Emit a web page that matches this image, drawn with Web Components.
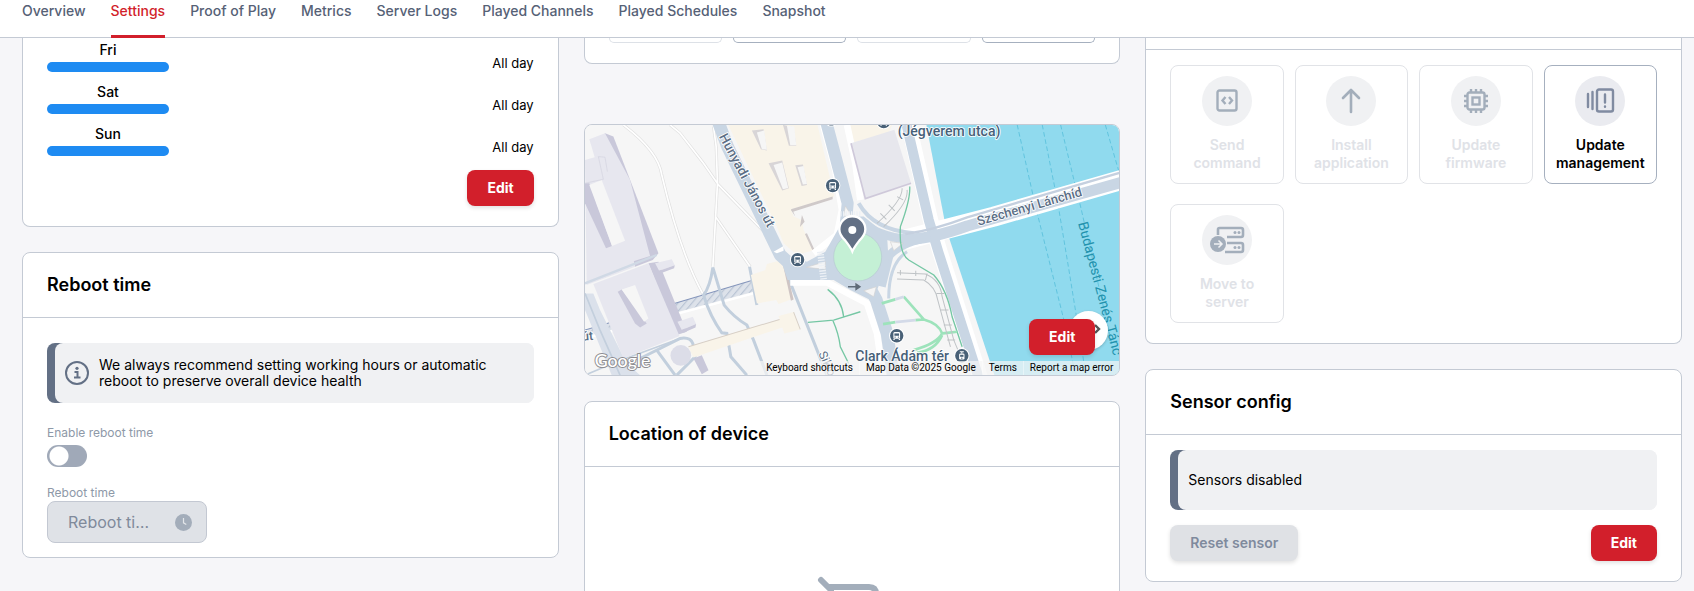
<!DOCTYPE html>
<html lang="en">
<head>
<meta charset="utf-8">
<title>Device settings</title>
<style>
  html { --line: #c4cad4; --red: #d21f2b; --slate: #637085; --muted: #a0a9b8; }
  body { margin: 0; background: #f6f6f9; color: #000; font: 14px/18px Inter, "Noto Sans", sans-serif; overflow: hidden; }
</style>
</head>
<body>
<settings-page></settings-page>
<script>
const define = (name, markup, setup) => {
  const t = document.createElement('template');
  t.innerHTML = '<style>*{box-sizing:border-box}:host([hidden]){display:none}</style>' + markup;
  customElements.define(name, class extends HTMLElement {
    constructor() {
      super();
      this.attachShadow({ mode: 'open' }).append(t.content.cloneNode(true));
    }
    connectedCallback() { if (setup) setup(this, this.shadowRoot); }
  });
};

define('tab-bar', `
<style>
  :host { display: block; background: #fff; box-shadow: inset 0 -1px var(--line); }
  nav { display: flex; gap: 25px; padding: 0 22px; }
  a { padding: 2px 0 15px; border-bottom: 3px solid transparent; color: #566176; font-weight: 500; text-decoration: none; white-space: nowrap; }
  a[aria-current] { color: var(--red); border-color: var(--red); }
</style>
<nav>
  <a href="#overview">Overview</a><a href="#settings" aria-current="page">Settings</a><a href="#proof">Proof of Play</a><a href="#metrics">Metrics</a><a href="#logs">Server Logs</a><a href="#channels">Played Channels</a><a href="#schedules">Played Schedules</a><a href="#snapshot">Snapshot</a>
</nav>`);

define('app-button', `
<style>
  :host { display: inline-block; }
  button { height: 36px; padding: 0 20px; border: 0; border-radius: 8px; background: var(--red); color: #fff; font: 700 14px/18px Inter, sans-serif; box-shadow: 0 2px 4px #0000001f; }
  button:disabled { background: #dfe1e5; color: #7f8a9d; font-weight: 600; }
</style>
<button type="button"><slot></slot></button>`,
(el, root) => { root.querySelector('button').disabled = el.hasAttribute('disabled'); });

/* `continued` marks a card whose beginning is scrolled under the tab bar */
define('app-card', `
<style>
  :host { display: block; background: #fff; border: 1px solid var(--line); border-radius: 8px; }
  :host([continued]) { border-top: 0; border-radius: 0 0 8px 8px; }
  header { padding: 20px 24px; border-bottom: 1px solid var(--line); }
  :host([continued]) header { padding: 0; height: 12px; }
  :host([headless]) header { display: none; }
  h2 { margin: 0; font: 600 18px/24px Inter, sans-serif; }
  .body { padding: 15px 24px 20px; }
  :host([continued][headless]) .body { padding-top: 0; }
</style>
<header><h2></h2></header><div class="body"><slot></slot></div>`,
(el, root) => { root.querySelector('h2').textContent = el.getAttribute('heading') || ''; });

define('day-row', `
<style>
  :host { display: flex; justify-content: space-between; height: 42px; }
  .day { width: 122px; text-align: center; font-weight: 500; }
  .bar { height: 10px; margin-top: 3px; border-radius: 5px; background: #1e8bf2; }
  .hours { margin-top: 13px; font-size: 13px; }
</style>
<div class="day"><slot></slot><div class="bar"></div></div><div class="hours">All day</div>`);

define('info-note', `
<style>
  :host { display: block; background: linear-gradient(90deg, var(--slate) 20px, #f0f1f3 20px); border-radius: 8px; padding-left: 8px; }
  div { display: flex; align-items: center; gap: 10px; min-height: 60px; padding: 0 16px 0 10px; border-radius: 8px; background: #f0f1f3; line-height: 16px; }
  ::slotted(svg) { flex: none; }
</style>
<div><slot name="icon"></slot><span><slot></slot></span></div>`);

define('action-tile', `
<style>
  :host { display: block; min-width: 0; }
  button { display: flex; flex-direction: column; align-items: center; gap: 10px; width: 100%; height: 119px; padding: 10px 0; background: #fff; border: 1px solid #a6b0bf; border-radius: 8px; color: #000; font: 600 14px/18px Inter, sans-serif; }
  .disc { display: grid; place-items: center; flex: none; width: 50px; height: 50px; border-radius: 50%; background: #eaebf0; color: #808ba1; }
  button:disabled { border-color: #e1e3e7; color: #e0e2e7; }
  button:disabled .disc { background: #f0f1f3; color: #a3aebb; }
  .label { width: 96px; }
</style>
<button type="button"><span class="disc"><slot name="icon"></slot></span><span class="label"><slot></slot></span></button>`,
(el, root) => { root.querySelector('button').disabled = el.hasAttribute('disabled'); });

define('toggle-field', `
<style>
  :host { display: flex; flex-direction: column; align-items: flex-start; gap: 4px; }
  label { color: #8e99a8; font-size: 12px; line-height: 16px; }
  input { appearance: none; margin: 0; width: 40px; height: 22px; border-radius: 11px; background: radial-gradient(circle at 12px 11px, #fff 9px, transparent 10px) #a0a9b8; }
</style>
<label for="t"><slot></slot></label><input id="t" type="checkbox" role="switch">`);

define('time-field', `
<style>
  :host { display: flex; flex-direction: column; align-items: flex-start; }
  label { color: #8e99a8; font-size: 12px; line-height: 16px; }
  .box { display: flex; align-items: center; gap: 24px; width: 160px; height: 42px; padding: 0 14px 0 20px; background: #dfe2e7; border: 1px solid #c3c8d2; border-radius: 8px; }
  input { flex: 1; min-width: 0; padding: 0; border: 0; background: none; font: 400 16px/20px Inter, sans-serif; text-overflow: ellipsis; }
  input::placeholder { color: #808a9b; opacity: 1; }
  svg { flex: none; }
</style>
<label for="v">Reboot time</label>
<div class="box"><input id="v" type="text" placeholder="Reboot time" disabled>
<svg width="17" height="17" viewBox="0 0 17 17"><circle cx="8.5" cy="8.5" r="8.5" fill="#a3adba"/><path d="M8.5 4v4.8l2.8 1.6" fill="none" stroke="#e3e6ea" stroke-width="1.2"/></svg></div>`);

define('device-map', `
<style>
  :host { display: block; position: relative; height: 252px; overflow: hidden; border: 1px solid var(--line); border-radius: 8px; background: #f6f6f6; font-family: Roboto, sans-serif; }
  .map { display: block; width: 100%; height: 100%; }
  .credits { position: absolute; right: 0; bottom: 0; display: flex; font-size: 10px; line-height: 14px; }
  .credits > * { padding: 0 6px; background: #f5f5f5b3; color: #000; text-decoration: none; border: 0; font: inherit; white-space: nowrap; }
  .credits > * + * { border-left: 1px solid #fff6; }
  .next { position: absolute; right: 11px; bottom: 25px; width: 39px; height: 39px; padding: 0 5px 0 0; border: 0; border-radius: 50%; background: #fff; box-shadow: 0 1px 3px #0003; text-align: right; }
  app-button { position: absolute; right: 24px; bottom: 20px; }
  .name { font-weight: 500; fill: #5b6e85; stroke: #fff; stroke-width: 5; paint-order: stroke; stroke-linejoin: round; }
  .place { fill: #466078; }
</style>
<svg class="map" viewBox="15 15 1602 750" preserveAspectRatio="xMidYMid slice" role="img" aria-label="Map">
  <defs>
    <pattern id="hatch" width="16" height="16" patternUnits="userSpaceOnUse" patternTransform="rotate(40)"><rect width="16" height="16" fill="#dde2ea"/><path d="M0 0v16" stroke="#b9c4d4" stroke-width="7"/></pattern>
    <g id="bus"><circle r="23" fill="#fff"/><circle r="20" fill="#496177"/><rect x="-10" y="-11" width="20" height="20" rx="4" fill="#fff"/><rect x="-7" y="-7" width="14" height="7" fill="#496177"/><circle cx="-5" cy="4" r="2" fill="#496177"/><circle cx="5" cy="4" r="2" fill="#496177"/><path d="M-8 9v4M8 9v4" stroke="#fff" stroke-width="4"/></g>
    <g id="tram"><circle r="23" fill="#fff"/><circle r="20" fill="#496177"/><rect x="-8" y="-7" width="16" height="18" rx="4" fill="#fff"/><path d="M-6 -12h12M0 -12v5" stroke="#fff" stroke-width="3"/><rect x="-5" y="-3" width="10" height="6" fill="#496177"/><circle cy="7" r="2" fill="#496177"/></g>
  </defs>
  <rect width="1640" height="790" fill="#f6f6f6"/>
  <path d="M1035 0 1092 300 1108 360 1250 790H1640V0z" fill="#90daee"/>
  <path d="M1310 15 1365 260 1450 600 1490 790M1385 15 1430 240 1465 450 1520 790M1440 15 1480 180 1500 260 1600 700M1574 15 1625 190" fill="none" stroke="#62c4de" stroke-width="3" stroke-dasharray="14 8"/>
  <!-- footpaths on the castle hill -->
  <g fill="none" stroke="#e0e0e0" stroke-width="9"><path d="M130 15Q235 95 245 165 300 400 370 525M270 15 300 40 370 130 415 195 600 385M400 20 408 80 412 190 398 440M406 290 510 440"/></g>
  <g fill="none" stroke="#fff" stroke-width="5"><path d="M130 15Q235 95 245 165 300 400 370 525M270 15 300 40 370 130 415 195 600 385M400 20 408 80 412 190 398 440M406 290 510 440"/></g>
  <!-- funicular -->
  <path d="M15 630 512 482 520 515 15 650z" fill="url(#hatch)"/><path d="M15 630 512 482" stroke="#8495bb" stroke-width="3"/><path d="M15 655 520 520" stroke="#fff" stroke-width="7"/>
  <g fill="none" stroke="#c2cfdd" stroke-width="9"><path d="M398 442Q390 500 370 525 390 590 425 638L440 640 452 710 500 765M398 442 432 555Q460 590 500 615L520 660 560 765M508 440 530 555M625 475 740 765"/><path d="M180 715 300 655Q330 650 338 670L345 710 290 765M230 690 285 765"/></g>
  <path d="M15 520 40 520 60 570 140 730 180 765H95L15 570z" fill="#dbe1eb"/><path d="M15 520 60 630 120 765M15 765 110 725 300 655" fill="none" stroke="#c3cfdd" stroke-width="5"/>
  <!-- castle buildings -->
  <path d="M75 40 100 50 235 400 218 420 165 440 60 60z" fill="#c9c8da"/>
  <path d="M28 58 75 40 150 180 210 408 160 424 165 440 20 495 15 120 44 112z" fill="#e7e7ef"/>
  <path d="M15 190 28 190 96 378 78 385 15 250z" fill="#c9c8da"/><path d="M28 195 65 180 135 362 96 378z" fill="#f6f6f6"/>
  <path d="M15 190 70 178 55 110 75 112 82 155" fill="none" stroke="#d3d3df" stroke-width="2"/>
  <path d="M235 425 320 635 290 645 205 430z" fill="#c9c8da"/>
  <path d="M40 492 205 430 298 648 130 715z" fill="#e7e7ef"/>
  <path d="M113 515 125 508 200 610 180 622 165 610z" fill="#c9c8da"/><path d="M125 508 165 495 205 595 192 605z" fill="#f6f6f6"/>
  <path d="M225 430 275 418 284 436 237 452zM292 605 338 590 348 612 305 630z" fill="#e7e7ef"/><path d="M237 452 284 436 282 445 242 460zM305 630 348 612 346 622 310 638z" fill="#c9c8da"/>
  <path d="M15 490 180 425 230 405" fill="none" stroke="#d0d9e5" stroke-width="7"/>
  <path d="M365 705 385 750 365 762 340 715z" fill="#c9c8da"/>
  <!-- beige city blocks -->
  <path d="M437 0H708L762 230 632 268 640 290 665 300 670 330 702 390 650 405 610 370 590 320z" fill="#f9f4e9"/>
  <path d="M632 268 757 230V238L636 276zM636 268 645 290 632 270M665 285l8 20-14 16M680 340l22 48-6 2-22-48" fill="#cfc9c9"/>
  <path d="M515 32 550 28 560 92 542 88zM608 15 640 22 648 78 626 78zM565 130 606 122 626 205 606 212zM645 136 668 134 680 195 664 198z" fill="#d8d5d7"/>
  <path d="M530 38 552 32 560 90 545 88zM620 18 642 20 648 76 630 76zM580 135 606 128 624 204 608 208zM652 142 670 138 680 192 668 194z" fill="#f6f6f6"/>
  <path d="M512 465 555 450 560 432 605 420 640 535 595 552 588 540 530 550z" fill="#f9f4e9"/><path d="M605 420 612 422 640 538 632 542z" fill="#cfc5c4"/>
  <path d="M325 680 598 598 595 588 640 576 660 628 612 640 606 622 340 712z" fill="#f9f4e9"/><path d="M325 680 598 598M640 576 660 628" stroke="#d7cfc6" stroke-width="3"/>
  <circle cx="302" cy="706" r="31" fill="#dcdde8"/>
  <path d="M795 15H935L925 38 812 70z" fill="#f9f4e9"/>
  <!-- white verges -->
  <g fill="none" stroke="#fff" stroke-linejoin="round"><path d="M728 15 765 150 785 270 770 345 700 400M630 487H740L860 550 890 640 910 780M800 15 825 130 840 240" stroke-width="20"/><path d="M970 360 1240 290 1640 175" stroke-width="60"/><path d="M985 15 1050 300 1080 400 1205 790" stroke-width="46"/></g>
  <path d="M812 70 942 30 992 190 855 236z" fill="#e7e7ed"/><path d="M812 70 855 236 992 190" fill="none" stroke="#cfc9da" stroke-width="5"/>
  <!-- roads -->
  <g fill="none" stroke="#c9d6e4" stroke-linejoin="round">
    <path d="M412 0 442 80 600 405 650 450" stroke-width="38"/>
    <path d="M736 0 768 120 802 250 795 330" stroke-width="36"/>
    <path d="M975 0 1045 300 1075 400 1200 790" stroke-width="30"/>
    <path d="M960 360Q1050 358 1160 318L1640 182" stroke-width="33"/>
    <path d="M910 430Q940 370 1050 350M850 310Q910 360 1020 358" stroke-width="26"/>
    <path d="M855 480 888 540 920 640 942 790" stroke-width="38"/>
    <path d="M930 400 905 500" stroke-width="22"/>
    <path d="M835 250Q880 330 1000 340" stroke-width="12"/>
    <path d="M980 395Q925 430 925 535" stroke-width="9"/>
  </g>
  <path d="M975 342Q1060 330 1160 292L1640 152" fill="none" stroke="#c5d0df" stroke-width="7"/>
  <path d="M595 400 625 410 680 425 735 395 775 325 790 290 850 290 920 345 925 430 885 520 870 540 810 510 760 480H622z" fill="#c9d6e4"/>
  <path d="M580 395 610 378V392L590 400z" fill="#fff"/>
  <path d="M678 442 735 425V448zM930 365 968 370 940 392zM850 512 888 500 880 530zM795 258 815 290 790 288z" fill="#f5f5f5" stroke="#d2d2d2" stroke-width="2"/>
  <path d="M720 395 730 478" stroke="#edf1f6" stroke-width="20" stroke-dasharray="4 4"/><path d="M780 282H840" stroke="#edf1f6" stroke-width="16" stroke-dasharray="4 4"/>
  <circle cx="832" cy="411" r="72" fill="#c4f0d5" stroke="#b7c9d2" stroke-width="2"/>
  <path d="M803 500h24v-8l12 8-12 8v-8" fill="#5f6b78" stroke="#5f6b78" stroke-width="4"/>
  <!-- park paths -->
  <g fill="none" stroke="#75c7a4" stroke-width="4"><path d="M742 508Q785 540 790 590M683 607 760 600 840 575M758 602Q775 640 780 680L805 730M988 200Q990 240 960 320 955 400 985 420L1060 465Q1100 510 1115 590L1145 680"/></g>
  <g fill="none" stroke="#9de3bb" stroke-width="8"><path d="M904 550 945 538M970 530 1030 598M908 612 945 606M1005 600 1030 598Q1075 610 1085 640L1130 635M1085 640Q1070 670 1000 690M1085 645Q1065 690 1010 698"/></g>
  <path d="M945 538 970 530M945 606 1005 600" stroke="#d3dae8" stroke-width="8"/>
  <g fill="none" stroke="#bfc3c6" stroke-width="3"><path d="M950 458 1035 462Q1080 480 1085 530L1120 660 1145 720M950 477 1030 480Q1065 500 1072 540L1110 680M965 205Q968 240 890 310M980 210Q985 250 910 320"/></g>
  <path d="M960 450v16M1006 452v16M1040 460l-5 20M1068 520h24M1080 570h24M1090 615h24M1100 660h24M900 280l18 18M925 255l18 18M950 230l18 10" stroke="#bfc3c6" stroke-width="3"/>
  <!-- labels -->
  <use href="#bus" x="757" y="197"/><use href="#bus" x="652" y="419"/><use href="#bus" x="949" y="647"/><use href="#tram" x="1144" y="707"/><use href="#bus" x="910" y="5"/><use href="#bus" x="753" y="-3"/>
  <text class="name" font-size="40" transform="translate(416 50) rotate(62)">Hunyadi János út</text>
  <text class="name" font-size="39" transform="translate(1194 317) rotate(-16)">Széchenyi Lánchíd</text>
  <text font-size="42" fill="#2292ad" transform="translate(1492 310) rotate(75)">Budapesti Zenés Tánc</text>
  <text class="name" font-size="36" transform="translate(714 700) rotate(66)" style="font-weight:400">Sikló</text>
  <text class="name" font-size="38" x="7" y="662" transform="rotate(-5 7 662)">út</text>
  <text class="name place" font-size="42" x="952" y="48">(Jégverem utca)</text>
  <text class="name place" font-size="42" x="825" y="722">Clark Ádám tér</text>
  <text font-size="53" x="44" y="740" font-family="Lato, sans-serif" font-weight="500" fill="#fff" stroke="#8e8e92" stroke-width="6" paint-order="stroke" stroke-linejoin="round">Google</text>
  <path d="M816 394Q812 384 795 362 777 345 777 328A39 39 0 0 1 855 328Q855 345 837 362 820 384 816 394z" fill="#637085" stroke="#fff" stroke-width="7"/><circle cx="816" cy="330" r="12" fill="#fff"/>
</svg>
<div class="credits"><span>Keyboard shortcuts</span><span>Map Data ©2025 Google</span><a href="#terms">Terms</a><a href="#report">Report a map error</a></div>
<button class="next" type="button" aria-label="Next"><svg width="10" height="12" viewBox="0 0 10 12"><path d="m2 2 4 4-4 4" fill="none" stroke="#555" stroke-width="2.4"/></svg></button>
<app-button>Edit</app-button>`);

define('settings-page', `
<style>
  :host { display: block; }
  main { display: grid; grid-template-columns: repeat(3, minmax(0, 1fr)); gap: 25px; align-items: start; padding: 0 12px 0 22px; }
  .column { display: flex; flex-direction: column; gap: 25px; min-width: 0; }
  .days { padding: 3px 0; }
  .end { display: flex; justify-content: flex-end; }
  .split { display: flex; justify-content: space-between; margin-top: 15px; }
  .reboot { display: flex; flex-direction: column; gap: 22px; padding-top: 10px; margin-bottom: -6px; }
  .reboot toggle-field { margin-bottom: -4px; }
  .tiles { display: grid; grid-template-columns: repeat(4, minmax(0, 1fr)); gap: 20px 11px; }
  .stubs { display: grid; grid-template-columns: repeat(4, minmax(0, 1fr)); gap: 11px; }
  .stubs i { height: 5px; border: 1px solid #dde1e7; border-top: 0; border-radius: 0 0 8px 8px; }
  .stubs i:nth-child(2n) { border-color: #a6b0bf; }
  device-map { margin-top: 35px; }
  .empty { display: flex; justify-content: center; padding: 94px 0 0; }
</style>
<tab-bar></tab-bar>
<main>
  <div class="column">
    <app-card continued headless>
      <div class="days"><day-row>Fri</day-row><day-row>Sat</day-row><day-row>Sun</day-row></div>
      <div class="end"><app-button>Edit</app-button></div>
    </app-card>
    <app-card heading="Reboot time">
      <div class="reboot">
        <info-note><svg slot="icon" width="24" height="24" viewBox="0 0 24 24" fill="none" stroke="#637085"><circle cx="12" cy="12" r="11" stroke-width="2"/><path d="M9.500 11H12.500V16M9 16.500H15.500" stroke-width="2"/><circle cx="12" cy="7.300" r="1.600" fill="#637085" stroke="none"/></svg>We always recommend setting working hours or automatic reboot to preserve overall device health</info-note>
        <toggle-field>Enable reboot time</toggle-field>
        <time-field></time-field>
      </div>
    </app-card>
  </div>
  <div class="column">
    <app-card continued headless><div class="stubs"><i></i><i></i><i></i><i></i></div></app-card>
    <device-map></device-map>
    <app-card heading="Location of device">
      <div class="empty"><svg width="70" height="60" viewBox="0 0 70 60" fill="none" stroke="#a3aebb" stroke-width="6" stroke-linecap="round" stroke-linejoin="round"><path d="M4 4 14 14V44Q14 50 20 50H52M12 11H52Q59 11 59 18V40"/></svg></div>
    </app-card>
  </div>
  <div class="column">
    <app-card continued>
      <div class="tiles">
        <action-tile disabled>Send command<svg slot="icon" width="24" height="24" viewBox="0 0 24 24" fill="none" stroke="currentColor" stroke-width="2.400"><rect x="2.500" y="1.500" width="19" height="20" rx="2"/><path d="m10.500 8-3 3.500 3 3.500M14 8l3 3.500-3 3.500"/></svg></action-tile>
        <action-tile disabled>Install application<svg slot="icon" width="24" height="26" viewBox="0 0 24 26" fill="none" stroke="currentColor" stroke-width="2.600" stroke-linecap="round" stroke-linejoin="round"><path d="M12 24V2M4 10l8-8 8 8"/></svg></action-tile>
        <action-tile disabled>Update firmware<svg slot="icon" width="26" height="26" viewBox="0 0 26 26" fill="none" stroke="currentColor" stroke-width="2.400"><rect x="4.500" y="4.500" width="17" height="17" rx="2"/><rect x="9.500" y="9.500" width="7" height="7"/><path d="M8 4V1M13 4V1M18 4V1M8 25v-3M13 25v-3M18 25v-3M4 8H1M4 13H1M4 18H1M25 8h-3M25 13h-3M25 18h-3"/></svg></action-tile>
        <action-tile>Update management<svg slot="icon" width="30" height="26" viewBox="0 0 30 26" fill="none" stroke="currentColor" stroke-width="2.400" stroke-linecap="round"><path d="M3 6v13M7.500 4v17M20 6.500v8M20 18.500v.300"/><rect x="12" y="1.500" width="16" height="22" rx="2"/></svg></action-tile>
        <action-tile disabled>Move to server<svg slot="icon" width="36" height="28" viewBox="0 0 36 28"><g fill="none" stroke="currentColor" stroke-width="2.600"><path d="M9 9V3.500Q9 2 10.500 2H32Q34 2 34 4V9Q34 11 32 11H18M18 17H32Q34 17 34 19V24Q34 26 32 26H16"/></g><circle cx="9" cy="18" r="8" fill="currentColor"/><path d="M5 18h8M9.500 14.500 13 18l-3.500 3.500" fill="none" stroke="#f0f1f3" stroke-width="1.500"/><g fill="currentColor"><circle cx="26" cy="6.500" r="1.500"/><circle cx="30" cy="6.500" r="1.500"/><circle cx="26" cy="21.500" r="1.500"/><circle cx="30" cy="21.500" r="1.500"/></g></svg></action-tile>
      </div>
    </app-card>
    <app-card heading="Sensor config">
      <info-note>Sensors disabled</info-note>
      <div class="split"><app-button disabled>Reset sensor</app-button><app-button>Edit</app-button></div>
    </app-card>
  </div>
</main>`);
</script>
</body>
</html>
